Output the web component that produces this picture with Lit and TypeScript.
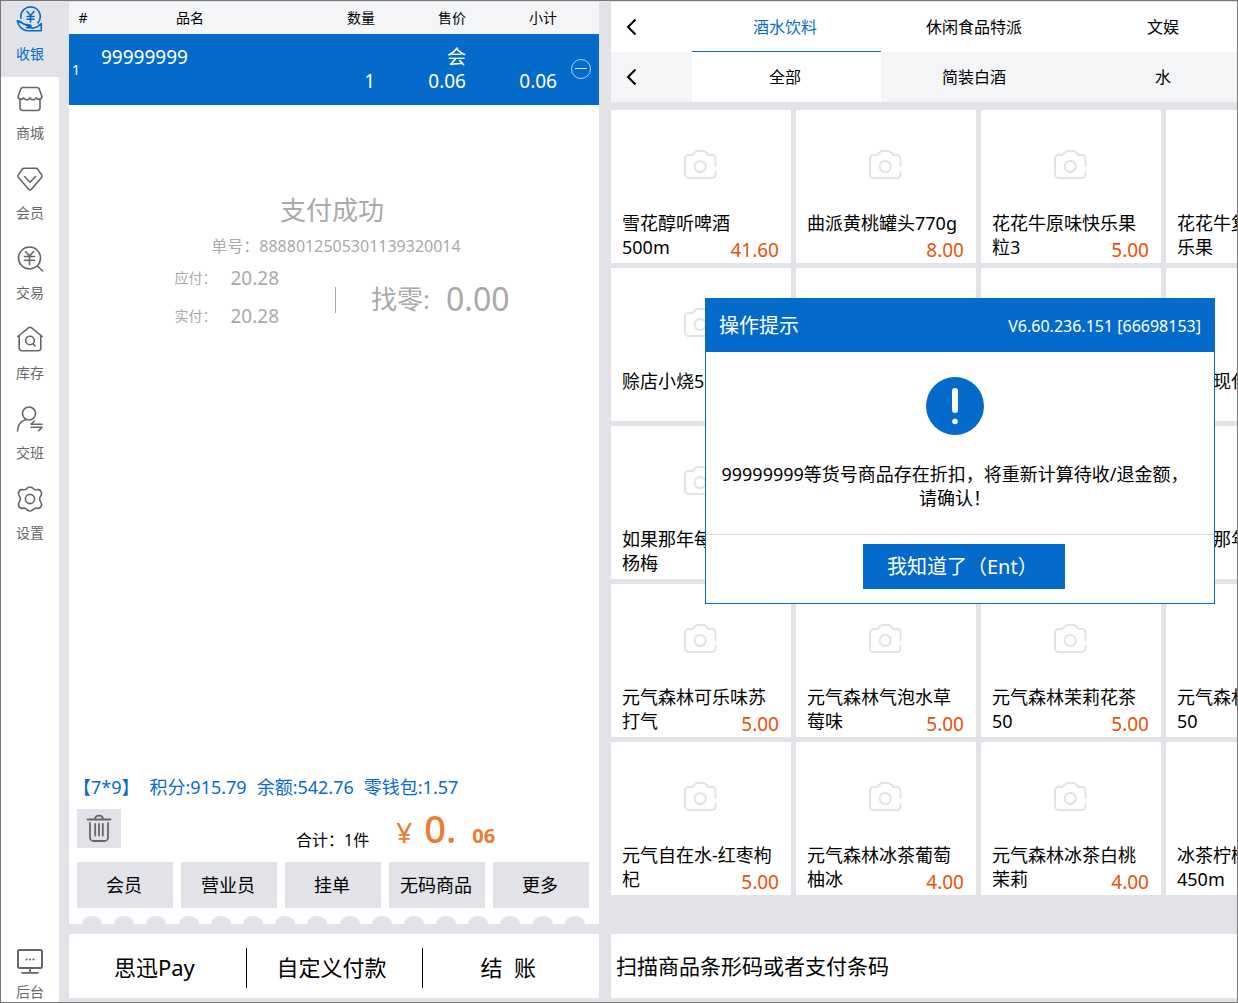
import { LitElement, html, css, svg, nothing } from "lit";
import { customElement, state } from "lit/decorators.js";
import { classMap } from "lit/directives/class-map.js";

const icons: Record<string, unknown> = {
  cash: svg`<path d="M5 12.200A9.700 9.700 0 1 1 22 16.800"/><path d="M11 5.500l3.500 4 3.500-4M14.500 9.500v6.500M11 10.500h7M11 13.300h7"/><path d="M1.300 14.800C3.800 14.300 5.600 15.800 7.500 18l6.200 1.100c2 .4 1.800 2.700 0 2.700h-3.200M16.500 22.300l4.500-1.300 4.300-3.500v7.300H12C6.500 24.800 2.500 20.500 1.300 14.800z"/>`,
  shop: svg`<path d="M7 2.500h14c1 0 1.800.5 2.200 1.400l2.600 7.200c.6 2.800-3.400 4.600-5.600 1.700-1.600 2.700-4.600 2.700-6.200 0-1.600 2.700-4.600 2.700-6.200 0-2.200 2.900-6.200 1.100-5.600-1.700l2.600-7.200C5.200 3 6 2.500 7 2.500z"/><path d="M4 14v8.500a3 3 0 0 0 3 3h14a3 3 0 0 0 3-3V14"/>`,
  member: svg`<path d="M8 3.200h12c.7 0 1.200.3 1.600.8l4.200 6.100c.5.7.4 1.500-.1 2.100L15.400 24.300c-.8.9-2 .9-2.800 0L2.300 12.200c-.5-.6-.6-1.400-.1-2.100L6.400 4c.4-.5.9-.8 1.600-.8z"/><path d="M8.500 11.500l5.500 5.800 5.500-5.800"/>`,
  trade: svg`<circle cx="13.500" cy="13" r="11"/><path d="M21.500 21l5 5M9.500 6.500l4 4.500 4-4.500M13.500 11v8.500M8.500 11.500h10M8.500 15.300h10"/>`,
  stock: svg`<path d="M3.200 10.500V23a2.800 2.800 0 0 0 2.800 2.800h16a2.800 2.800 0 0 0 2.800-2.800V10.500M1.800 11.500L12.700 2.700c.8-.6 1.800-.6 2.600 0l10.900 8.800"/><circle cx="14" cy="15.500" r="4.300"/><path d="M17 18.800l2.200 2.200"/>`,
  shift: svg`<circle cx="13" cy="8.500" r="6.500"/><path d="M1.500 26c.3-6 3.300-10 8.300-11.200M26 19.300H15l3.300-3.300M15 22.300h11l-3.300 3.300"/>`,
  settings: svg`<path d="M11.800 2.700c1.300-.8 3.100-.8 4.400 0l1.800 1.500c.8.6 1.500.8 2.400.6l1.600-.2c1.400 0 2.800 1.200 3.300 2.500.5 1.200.3 2.400-.4 3.500l-.7 1.200c-.5.9-.5 3.500 0 4.400l.7 1.200c.7 1.100.9 2.300.4 3.500-.5 1.300-1.900 2.500-3.300 2.500l-1.600-.2c-.9-.2-1.600 0-2.400.6l-1.800 1.500c-1.300.8-3.100.8-4.400 0L10 23.800c-.8-.6-1.500-.8-2.400-.6l-1.600.2c-1.400 0-2.800-1.200-3.300-2.500-.5-1.200-.3-2.400.4-3.500l.7-1.200c.5-.9.5-3.500 0-4.400l-.7-1.200c-.7-1.100-.9-2.300-.4-3.500C3.200 5.800 4.600 4.600 6 4.600l1.600.2c.9.200 1.600 0 2.400-.6z"/><circle cx="14" cy="14" r="4.600"/>`,
  admin: svg`<rect x="2" y="3" width="24" height="18" rx="1.500" stroke-width="2"/><path d="M14 21.500v4M6 25.800h16" stroke-width="1.800"/><g fill="currentColor" stroke="none"><circle cx="10.500" cy="12.500" r="1.100"/><circle cx="14" cy="12.500" r="1.100"/><circle cx="17.500" cy="12.500" r="1.100"/></g>`,
};

const navItems = [
  ["cash", "收银"],
  ["shop", "商城"],
  ["member", "会员"],
  ["trade", "交易"],
  ["stock", "库存"],
  ["shift", "交班"],
  ["settings", "设置"],
];

interface Product {
  name: string[];
  price?: string;
}

const products: Product[] = [
  { name: ["雪花醇听啤酒", "500m"], price: "41.60" },
  { name: ["曲派黄桃罐头770g"], price: "8.00" },
  { name: ["花花牛原味快乐果", "粒3"], price: "5.00" },
  { name: ["花花牛复", "乐果"] },
  { name: ["赊店小烧5"] },
  { name: [] },
  { name: [] },
  { name: ["\u3000\u3000现代"] },
  { name: ["如果那年每", "杨梅"] },
  { name: [] },
  { name: [] },
  { name: ["\u3000\u3000那年"] },
  { name: ["元气森林可乐味苏", "打气"], price: "5.00" },
  { name: ["元气森林气泡水草", "莓味"], price: "5.00" },
  { name: ["元气森林茉莉花茶", "50"], price: "5.00" },
  { name: ["元气森林", "50"] },
  { name: ["元气自在水-红枣枸", "杞"], price: "5.00" },
  { name: ["元气森林冰茶葡萄", "柚冰"], price: "4.00" },
  { name: ["元气森林冰茶白桃", "茉莉"], price: "4.00" },
  { name: ["冰茶柠檬", "450m"] },
];

const reset = css`
  * { box-sizing: border-box; }
  button, input {
    font: inherit;
    color: inherit;
    border: 0;
    border-radius: 0;
    padding: 0;
    margin: 0;
    background: none;
  }
  button { cursor: pointer; }
  svg { display: block; }
`;

@customElement("pos-nav")
class PosNav extends LitElement {
  @state() private active = "cash";

  static styles = [reset, css`
    :host { display: flex; flex-direction: column; justify-content: space-between; background: #fff; }
    .list { display: flex; flex-direction: column; }
    .item {
      display: flex;
      flex-direction: column;
      align-items: center;
      gap: 10px;
      height: 80px;
      padding-top: 8px;
      font-size: 14px;
      line-height: 20px;
      color: #666;
    }
    .item:first-child { height: 76px; padding-top: 5px; }
    .active { color: #056bca; background: #e2e3e8; }
    .last { height: auto; gap: 7px; padding: 0; width: 100%; }
    .icon { width: 28px; height: 28px; fill: none; stroke: currentColor; stroke-width: 1.6; stroke-linecap: round; stroke-linejoin: round; }
  `];

  private icon(name: string) {
    return html`<svg class="icon" viewBox="0 0 28 28" aria-hidden="true">${icons[name]}</svg>`;
  }

  render() {
    return html`
      <nav class="list">
        ${navItems.map(([id, label]) => html`
          <button class=${classMap({ item: true, active: this.active === id })} @click=${() => (this.active = id)}>
            ${this.icon(id)}<span>${label}</span>
          </button>`)}
      </nav>
      <button class="item last">${this.icon("admin")}<span>后台</span></button>
    `;
  }
}

@customElement("pos-order")
class PosOrder extends LitElement {
  static styles = [reset, css`
    :host { display: flex; flex-direction: column; gap: 10px; }
    .sheet { flex: 1; display: flex; flex-direction: column; background: #fff; }
    .lines { width: 100%; border-collapse: collapse; table-layout: fixed; }
    .lines th { height: 32px; padding: 0; background: #f3f5f7; font-size: 14px; font-weight: 400; line-height: 20px; color: #000; }
    .lines .num { text-align: right; padding: 0; }
    .lines td { padding: 0; background: #056bca; color: #fff; font-size: 19px; line-height: 24px; vertical-align: bottom; }
    .lines td.num { padding-bottom: 12px; }
    .lines td.name { vertical-align: top; padding: 11px 0 0 4px; }
    .lines td.index { vertical-align: middle; padding-left: 3px; font-size: 14px; }
    .lines td.action { vertical-align: middle; padding-bottom: 2px; }
    .row { height: 71px; }
    .c-index { width: 28px; }
    .c-qty { width: 92px; }
    .c-price { width: 91px; }
    .c-action { width: 42px; }
    .tag { display: block; }
    .remove { display: flex; align-items: center; justify-content: center; width: 20px; height: 20px; margin-left: 14px; border: 1px solid #b4cfec; border-radius: 50%; }
    .remove::before { content: ""; width: 12px; height: 1px; background: #dbe8f6; }

    .paid { display: flex; flex-direction: column; align-items: center; padding: 85px 0 0 4px; color: #a9a9a9; }
    .paid-title { margin: 0 8px 0 0; font-size: 26px; line-height: 40px; font-weight: 400; }
    .paid-no { font-size: 16px; line-height: 32px; margin: 0; }
    .paid-detail { display: flex; align-items: center; margin: 4px 0 0; padding-left: 12px; }
    .amounts { display: grid; grid-template-columns: 56px auto; row-gap: 14px; align-items: center; margin: 0; line-height: 24px; }
    .amounts dt { font-size: 14px; }
    .amounts dd { margin: 0; font-size: 19px; }
    .rule { width: 1px; height: 26px; margin: 6px 35px 0 56px; background: #a9a9a9; }
    .change { display: flex; align-items: center; gap: 16px; padding-top: 4px; font-size: 26px; line-height: 40px; }
    .change-value { font-size: 32px; }

    .foot { margin-top: auto; padding: 0 10px 0 8px; display: flex; flex-direction: column; }
    .account { display: flex; gap: 10px; margin: 0 0 0 -4px; font-size: 18px; line-height: 24px; color: #056bca; }
    .total-row { display: flex; align-items: flex-start; margin-top: 10px; height: 53px; }
    .trash { display: flex; align-items: center; justify-content: center; width: 44px; height: 39px; background: #e2e3e8; color: #666; }
    .trash-icon { width: 28px; height: 30px; fill: none; stroke: currentColor; stroke-width: 1.8; stroke-linecap: round; stroke-linejoin: round; }
    .total { display: flex; flex: 1; align-items: flex-end; height: 43px; padding-left: 175px; font-size: 16px; line-height: 24px; }
    .money { display: flex; align-items: flex-end; margin-left: 27px; color: #ed7b2f; }
    .currency { font-size: 28px; line-height: 40px; }
    .whole { font-size: 38px; line-height: 48px; font-weight: 500; margin-left: 12px; }
    .cents { font-size: 20px; line-height: 32px; font-weight: 700; margin-left: 16px; }
    .actions { display: grid; grid-template-columns: repeat(5, minmax(0, 1fr)); gap: 8px; }
    .action-btn { height: 46px; padding: 0 2px 2px 0; background: #e2e3e8; font-size: 18px; white-space: nowrap; }
    .scallops { display: flex; justify-content: space-between; padding: 8px 14px 0 13px; }
    .scallop { width: 20px; height: 8px; background: #e2e3e8; border-radius: 10px 10px 0 0 / 8px 8px 0 0; }

    .pay { display: grid; grid-template-columns: repeat(3, minmax(0, 1fr)); padding: 14px 0 10px; background: #fff; }
    .pay-btn { height: 40px; padding: 0 6px 4px 0; font-size: 22px; white-space: pre; border-left: 1px solid #000; }
    .pay-btn:first-child { border-left: 0; }
  `];

  render() {
    return html`
      <section class="sheet">
        <table class="lines">
          <colgroup>
            <col class="c-index"><col><col class="c-qty"><col class="c-price"><col class="c-price"><col class="c-action">
          </colgroup>
          <thead>
            <tr><th>#</th><th>品名</th><th class="num">数量</th><th class="num">售价</th><th class="num">小计</th><th></th></tr>
          </thead>
          <tbody>
            <tr class="row">
              <td class="index">1</td>
              <td class="name">99999999</td>
              <td class="num">1</td>
              <td class="num"><span class="tag">会</span>0.06</td>
              <td class="num">0.06</td>
              <td class="action"><button class="remove" aria-label="−"></button></td>
            </tr>
          </tbody>
        </table>

        <div class="paid">
          <h2 class="paid-title">支付成功</h2>
          <p class="paid-no">单号：8888012505301139320014</p>
          <div class="paid-detail">
            <dl class="amounts">
              <dt>应付：</dt><dd>20.28</dd>
              <dt>实付：</dt><dd>20.28</dd>
            </dl>
            <span class="rule"></span>
            <div class="change"><span>找零:</span><span class="change-value">0.00</span></div>
          </div>
        </div>

        <div class="foot">
          <p class="account"><span>【7*9】</span><span>积分:915.79</span><span>余额:542.76</span><span>零钱包:1.57</span></p>
          <div class="total-row">
            <button class="trash" aria-label="🗑">
              <svg class="trash-icon" viewBox="0 0 28 30" aria-hidden="true">
                <path d="M2.500 5.500h23M10 5.300c0-5 8-5 8 0M5 9v14.500a3.500 3.500 0 0 0 3.500 3.500h11a3.500 3.500 0 0 0 3.500-3.500V9M10.200 10v11.500M14 10v11.500M17.800 10v11.500"/>
              </svg>
            </button>
            <div class="total">
              <span>合计：1件</span>
              <span class="money"><span class="currency">¥</span><span class="whole">0.</span><span class="cents">06</span></span>
            </div>
          </div>
          <div class="actions">
            ${["会员", "营业员", "挂单", "无码商品", "更多"].map((t) => html`<button class="action-btn">${t}</button>`)}
          </div>
        </div>
        <div class="scallops">${Array.from({ length: 16 }, () => html`<span class="scallop"></span>`)}</div>
      </section>
      <div class="pay">
        ${["思迅Pay", "自定义付款", "结  账"].map((t) => html`<button class="pay-btn">${t}</button>`)}
      </div>
    `;
  }
}

@customElement("pos-catalog")
class PosCatalog extends LitElement {
  static styles = [reset, css`
    :host { display: flex; flex-direction: column; overflow: hidden; }
    .tabs { display: flex; background: #fff; font-size: 16px; line-height: 24px; }
    .sub { background: #f3f5f7; }
    .prev { flex: none; width: 81px; height: 50px; padding-left: 12px; }
    .prev-icon { width: 18px; height: 18px; fill: none; stroke: #000; stroke-width: 2; }
    .tab { flex: none; width: 189px; height: 50px; padding-right: 3px; border-bottom: 1px solid transparent; }
    .tab.current { color: #056bca; border-bottom-color: #056bca; }
    .sub .current { color: #000; background: #fff; border-bottom-color: #fff; }
    .goods { display: grid; grid-template-columns: repeat(4, 180px); gap: 5px; padding-top: 8px; }
    .card { display: flex; flex-direction: column; align-items: stretch; height: 153px; padding: 39px 12px 1px 11px; background: #fff; text-align: left; }
    .camera { align-self: center; width: 36px; height: 32px; margin: 0 2px 30px 0; fill: none; stroke: #e3e3e3; stroke-width: 2; stroke-linecap: round; stroke-linejoin: round; }
    .name { height: 24px; font-size: 18px; line-height: 24px; white-space: pre; }
    .tail { display: flex; justify-content: space-between; align-items: flex-start; }
    .price { padding-top: 3px; font-size: 19px; line-height: 24px; color: #e8520a; }
    .scan { width: 100%; height: 64px; margin-top: auto; padding: 0 5px; background: #fff; font-size: 21px; outline: 0; }
    .scan::placeholder { color: #000; opacity: 1; }
  `];

  private tabRow(labels: string[], sub: boolean) {
    return html`
      <div class=${classMap({ tabs: true, sub })}>
        <button class="prev" aria-label="‹"><svg class="prev-icon" viewBox="0 0 18 18" aria-hidden="true"><path d="M12.500 1.500L5 9l7.500 7.500"/></svg></button>
        ${labels.map((t, i) => html`<button class=${classMap({ tab: true, current: i === 0 })}>${t}</button>`)}
      </div>`;
  }

  render() {
    return html`
      ${this.tabRow(["酒水饮料", "休闲食品特派", "文娱"], false)}
      ${this.tabRow(["全部", "简装白酒", "水"], true)}
      <div class="goods">
        ${products.map((p) => html`
          <button class="card">
            <svg class="camera" viewBox="0 0 36 32" aria-hidden="true">
              <path d="M33.500 17V9.500A3.500 3.500 0 0 0 30 6h-3.500L24 3.300C23.300 2.500 22.500 2 21.500 2h-6c-1 0-1.800.500-2.500 1.300L10.500 6H6.500A3.500 3.500 0 0 0 3 9.500v16A3.500 3.500 0 0 0 6.500 29h23.500a3.500 3.500 0 0 0 3.500-3.500V23"/>
              <circle cx="18.200" cy="17.500" r="5.600"/>
            </svg>
            <span class="name">${p.name[0]}</span>
            <span class="tail">
              <span class="name">${p.name[1]}</span>
              ${p.price ? html`<span class="price">${p.price}</span>` : nothing}
            </span>
          </button>`)}
      </div>
      <input class="scan" type="text" aria-label="扫描商品条形码或者支付条码" placeholder="扫描商品条形码或者支付条码">
    `;
  }
}

@customElement("pos-notice")
class PosNotice extends LitElement {
  static styles = [reset, css`
    :host { display: block; background: #fff; border: 1px solid #056bca; }
    .head { display: flex; align-items: center; justify-content: space-between; height: 53px; padding: 0 13px; background: #056bca; color: #fff; }
    .title { margin: 0; font-size: 20px; font-weight: 400; line-height: 28px; }
    .version { font-size: 16px; line-height: 24px; }
    .body { display: flex; flex-direction: column; align-items: center; gap: 27px; padding: 25px 18px 24px 8px; border-bottom: 1px solid #ddd; }
    .mark { width: 58px; height: 58px; }
    .message { margin: 0; font-size: 18px; line-height: 24px; text-align: center; }
    .foot { display: flex; justify-content: center; padding: 9px 0 14px 8px; }
    .ok { padding: 0 24px 2px; min-width: 202px; height: 45px; background: #056bca; color: #fff; font-size: 20px; text-align: left; white-space: nowrap; }
  `];

  render() {
    return html`
      <div role="alertdialog" aria-labelledby="title">
        <header class="head">
          <h1 class="title" id="title">操作提示</h1>
          <span class="version">V6.60.236.151 [66698153]</span>
        </header>
        <div class="body">
          <svg class="mark" viewBox="0 0 58 58" aria-hidden="true">
            <circle cx="29" cy="29" r="29" fill="#056bca"/>
            <rect x="26" y="11" width="6" height="25" rx="3" fill="#fff"/>
            <circle cx="29" cy="44.500" r="2.800" fill="#fff"/>
          </svg>
          <p class="message">99999999等货号商品存在折扣，将重新计算待收/退金额，<br>请确认！</p>
        </div>
        <footer class="foot"><button class="ok">我知道了（Ent）</button></footer>
      </div>
    `;
  }
}

@customElement("app-root")
class AppRoot extends LitElement {
  static styles = [reset, css`
    :host { display: block; font-family: "Noto Sans", "Noto Sans CJK SC", sans-serif; color: #000; }
    .frame {
      display: grid;
      grid-template-columns: 58px minmax(0, 552fr) minmax(0, 626fr);
      min-height: 100vh;
      border: 1px solid #777;
      background: #e2e3e8;
      overflow: hidden;
    }
    .order { margin: 1px 12px 4px 10px; }
    .work { position: relative; display: flex; margin: 1px 0 4px; }
    .catalog { flex: 1; min-width: 0; }
    .notice { position: absolute; top: 296px; right: 22px; width: 510px; }
  `];

  render() {
    return html`
      <main class="frame" lang="zh-CN">
        <pos-nav></pos-nav>
        <pos-order class="order"></pos-order>
        <div class="work">
          <pos-catalog class="catalog"></pos-catalog>
          <pos-notice class="notice"></pos-notice>
        </div>
      </main>
    `;
  }
}
